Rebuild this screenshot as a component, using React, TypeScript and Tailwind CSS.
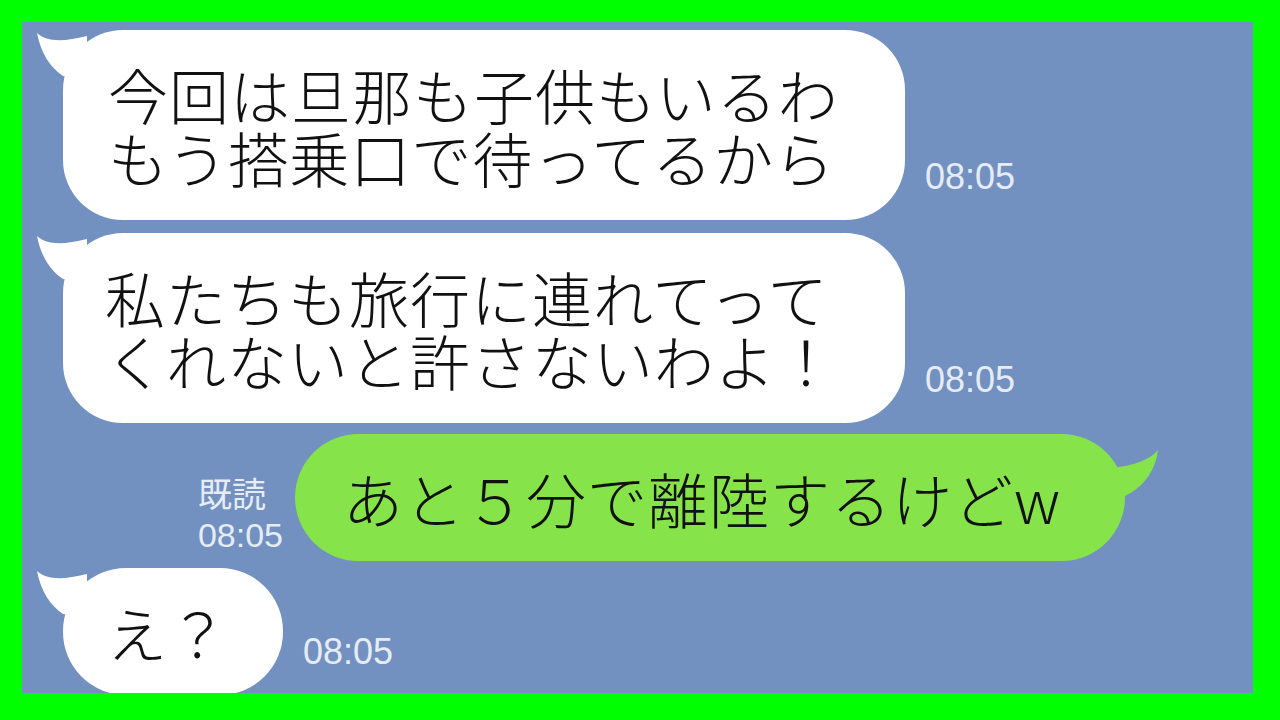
import React from "react";

const jp = {
  fontFamily: '"Noto Sans CJK JP Light", "Noto Sans CJK JP", "Noto Sans", sans-serif',
};
const ts = { fontFamily: '"Liberation Sans", "Noto Sans CJK JP", sans-serif' };

function LeftTail() {
  return (
    <svg
      className="absolute left-[-30px] top-0 overflow-visible"
      width="60"
      height="60"
      viewBox="-30 0 60 60"
    >
      <path
        d="M -26 3 C -16 12, 0 12, 24 6 L 24 50 L 0 46 C -12 38, -22 24, -26 3 Z"
        fill="#ffffff"
      />
    </svg>
  );
}

function RightTail() {
  return (
    <svg
      className="absolute right-[-40px] top-0 overflow-visible"
      width="60"
      height="80"
      viewBox="-20 0 60 80"
    >
      <path
        d="M 33 16 C 25 26, 8 32, -14 34 L -14 70 L 0 62 C 15 55, 30 40, 33 16 Z"
        fill="#86e34a"
      />
    </svg>
  );
}

function Time({ children }: { children: React.ReactNode }) {
  return (
    <div style={ts} className="text-[36px] leading-[36px] text-[#e6ecf5] mb-[25px]">
      {children}
    </div>
  );
}

export default function App() {
  return (
    <div className="w-[1280px] h-[720px] bg-[#00ff00] pt-[22px] pl-[22px] pr-[27px] pb-[27px]">
      <div className="w-full h-full bg-[#7291c1] flex flex-col pt-[8px] pl-[41px] overflow-hidden">
        <div className="flex items-end gap-[20px]">
          <div
            style={jp}
            className="relative w-[842px] bg-white rounded-[60px] pl-[45px] py-[32px] text-[60px] font-light leading-[63px] tracking-[1px] text-[#111]"
          >
            <LeftTail />
            <div className="relative">今回は旦那も子供もいるわ</div>
            <div className="relative">もう搭乗口で待ってるから</div>
          </div>
          <Time>08:05</Time>
        </div>

        <div className="flex items-end gap-[20px] mt-[13px]">
          <div
            style={jp}
            className="relative w-[842px] bg-white rounded-[60px] pl-[42px] py-[32px] text-[60px] font-light leading-[63px] tracking-[1px] text-[#111]"
          >
            <LeftTail />
            <div className="relative">私たちも旅行に連れてって</div>
            <div className="relative">くれないと許さないわよ！</div>
          </div>
          <Time>08:05</Time>
        </div>

        <div className="flex items-end justify-end gap-[12px] mt-[11px] pr-[128px]">
          <div
            style={ts}
            className="text-[34px] leading-[40px] text-[#e6ecf5] mb-[6px]"
          >
            <div>既読</div>
            <div>08:05</div>
          </div>
          <div
            style={jp}
            className="relative w-[830px] bg-[#86e34a] rounded-[64px] pl-[48px] py-[32px] text-[60px] font-light leading-[63px] tracking-[1px] text-[#111]"
          >
            <RightTail />
            <div className="relative">あと５分で離陸するけどw</div>
          </div>
        </div>

        <div className="flex items-end gap-[20px] mt-[7px]">
          <div
            style={jp}
            className="relative w-[220px] bg-white rounded-[63px] pl-[44px] py-[32px] text-[60px] font-light leading-[63px] tracking-[1px] text-[#111]"
          >
            <LeftTail />
            <div className="relative">え？</div>
          </div>
          <Time>08:05</Time>
        </div>
      </div>
    </div>
  );
}
